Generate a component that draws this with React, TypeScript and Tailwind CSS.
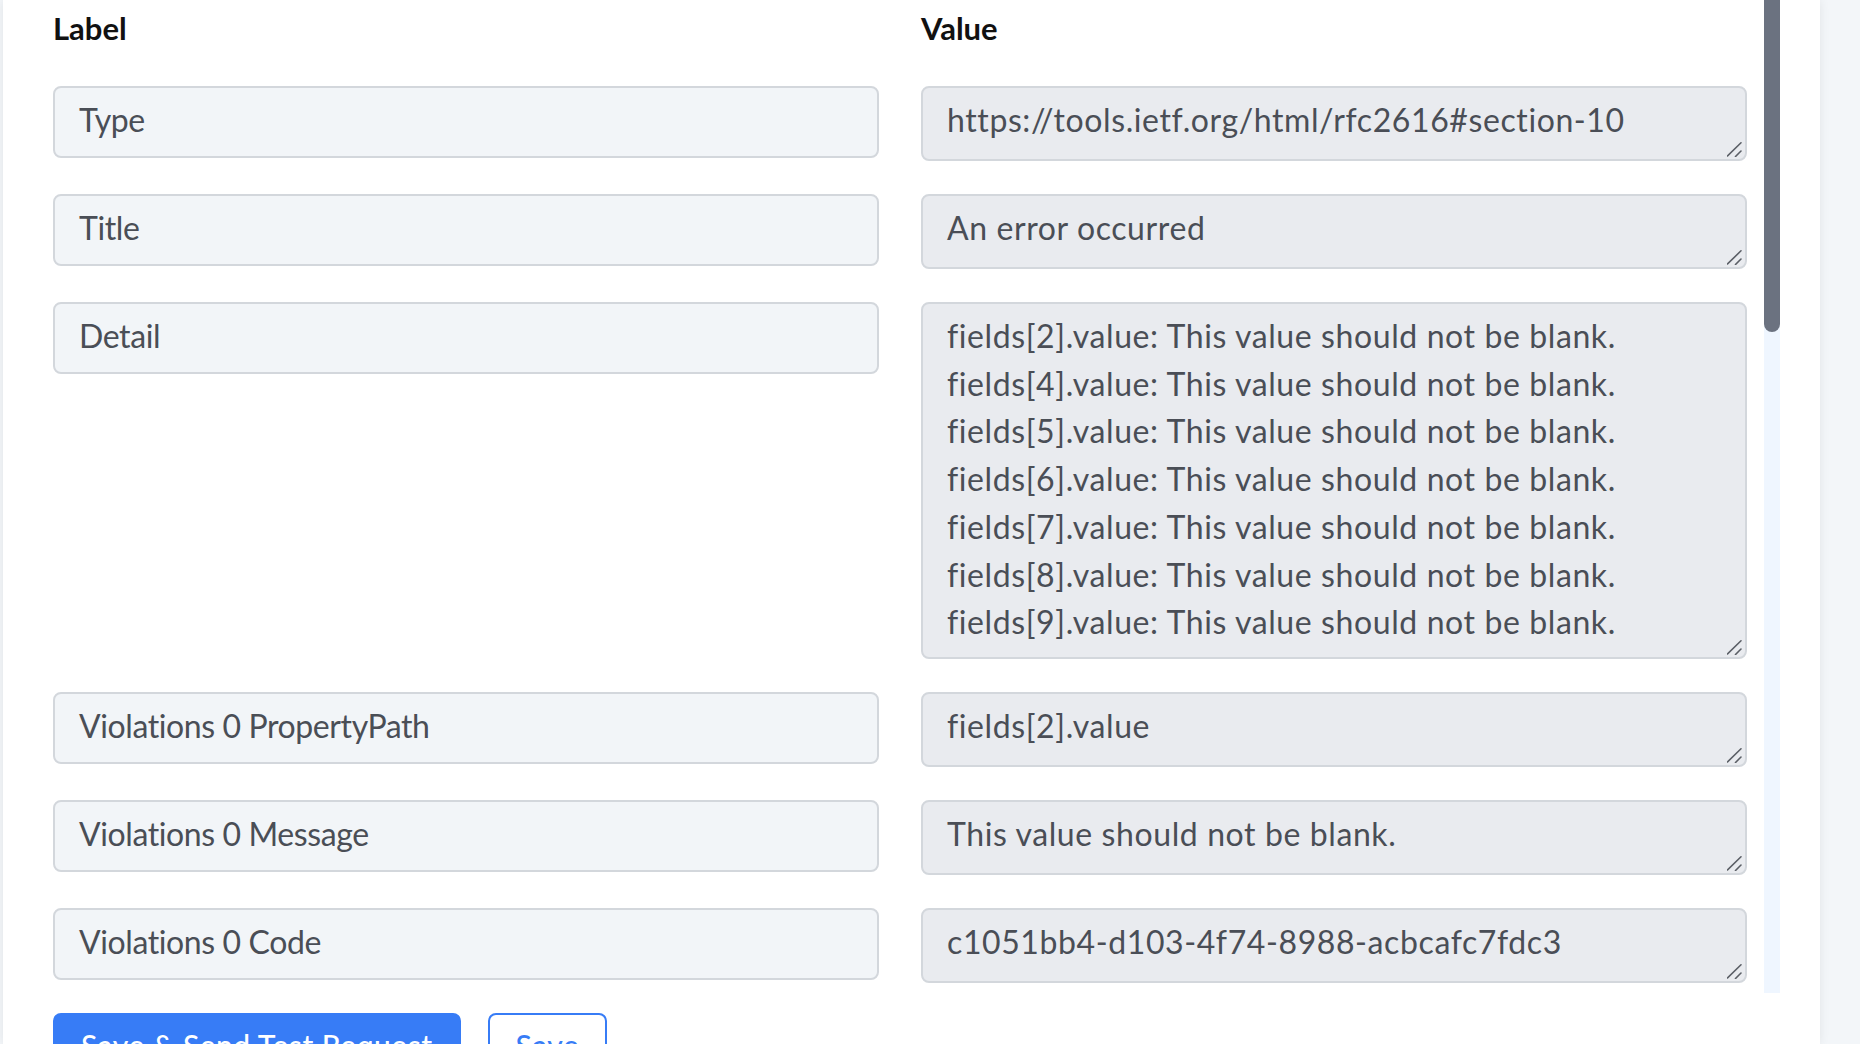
import React from "react";

type Row = { label: string; value: string[] };

const blankFields = [2, 4, 5, 6, 7, 8, 9];
const NOT_BLANK = "c1051bb4-d103-4f74-8988-acbcafc7fdc3";

const rows: Row[] = [
  { label: "Type", value: ["https://tools.ietf.org/html/rfc2616#section-10"] },
  { label: "Title", value: ["An error occurred"] },
  {
    label: "Detail",
    value: blankFields.map((n) => `fields[${n}].value: This value should not be blank.`),
  },
  ...blankFields.flatMap((n, i) => [
    { label: `Violations ${i} PropertyPath`, value: [`fields[${n}].value`] },
    { label: `Violations ${i} Message`, value: ["This value should not be blank."] },
    { label: `Violations ${i} Code`, value: [NOT_BLANK] },
  ]),
];

function Grip() {
  return (
    <svg
      className="absolute right-[2px] bottom-[2px] w-[16px] h-[16px]"
      viewBox="0 0 16 16"
      fill="none"
      stroke="#5b5f66"
      strokeWidth="1.6"
      strokeLinecap="round"
    >
      <path d="M0.5 15L14 1.8" />
      <path d="M8.5 15.5L14 10" />
    </svg>
  );
}

function LabelField({ text }: { text: string }) {
  return (
    <div className="h-[72px] rounded-[8px] border-2 border-[#d3d7dc] bg-[#f2f5f8] pl-[24px] pt-[8px] leading-[47px] text-[32px] tracking-[-0.4px] text-[#4a4e56] truncate">
      {text}
    </div>
  );
}

function ValueField({ lines }: { lines: string[] }) {
  return (
    <div className="relative min-h-[75px] rounded-[8px] border-2 border-[#d3d7dc] bg-[#e9ebef] pl-[24px] pr-[24px] pt-[8px] pb-[11px] leading-[47.7px] text-[32px] tracking-[0.6px] text-[#4a4e56]">
      {lines.map((l, i) => (
        <div key={i} className="whitespace-nowrap">
          {l}
        </div>
      ))}
      <Grip />
    </div>
  );
}

export default function App() {
  return (
    <div
      className="w-[1860px] h-[1044px] overflow-hidden bg-[#f3f6f9] flex"
      style={{ fontFamily: "Lato, 'Noto Sans', sans-serif" }}
    >
      <div className="ml-[3px] w-[1817px] h-full bg-white shadow-[0_0_10px_rgba(0,0,0,0.08)] flex flex-col pl-[50px] pr-[40px]">
        <div className="h-[993px] flex shrink-0">
          <div className="flex-1 overflow-hidden">
            <div className="grid grid-cols-2 gap-x-[42px] pt-[4px] mb-[34px]">
              <div className="h-[48px] leading-[48px] text-[31px] font-bold text-[#111]">Label</div>
              <div className="h-[48px] leading-[48px] text-[31px] font-bold text-[#111]">Value</div>
            </div>
            {rows.map((r, i) => (
              <div key={i} className="grid grid-cols-2 gap-x-[42px] items-start mb-[33px]">
                <LabelField text={r.label} />
                <ValueField lines={r.value} />
              </div>
            ))}
          </div>
          <div className="ml-[17px] w-[16px] h-full bg-[#eff6ff]">
            <div className="h-[332px] bg-[#6b7280] rounded-b-[8px]" />
          </div>
        </div>
        <div className="mt-[20px] flex items-start gap-[27px]">
          <button className="rounded-[8px] border-2 border-[#377cf6] bg-[#377cf6] px-[26px] pt-[10px] pb-[12px] leading-[40px] text-[30px] tracking-[0.5px] font-medium text-white whitespace-nowrap">
            Save &amp; Send Test Request
          </button>
          <button className="rounded-[8px] border-2 border-[#377cf6] bg-white px-[26px] pt-[10px] pb-[12px] leading-[40px] text-[30px] tracking-[0.5px] font-medium text-[#377cf6] whitespace-nowrap">
            Save
          </button>
        </div>
      </div>
    </div>
  );
}
